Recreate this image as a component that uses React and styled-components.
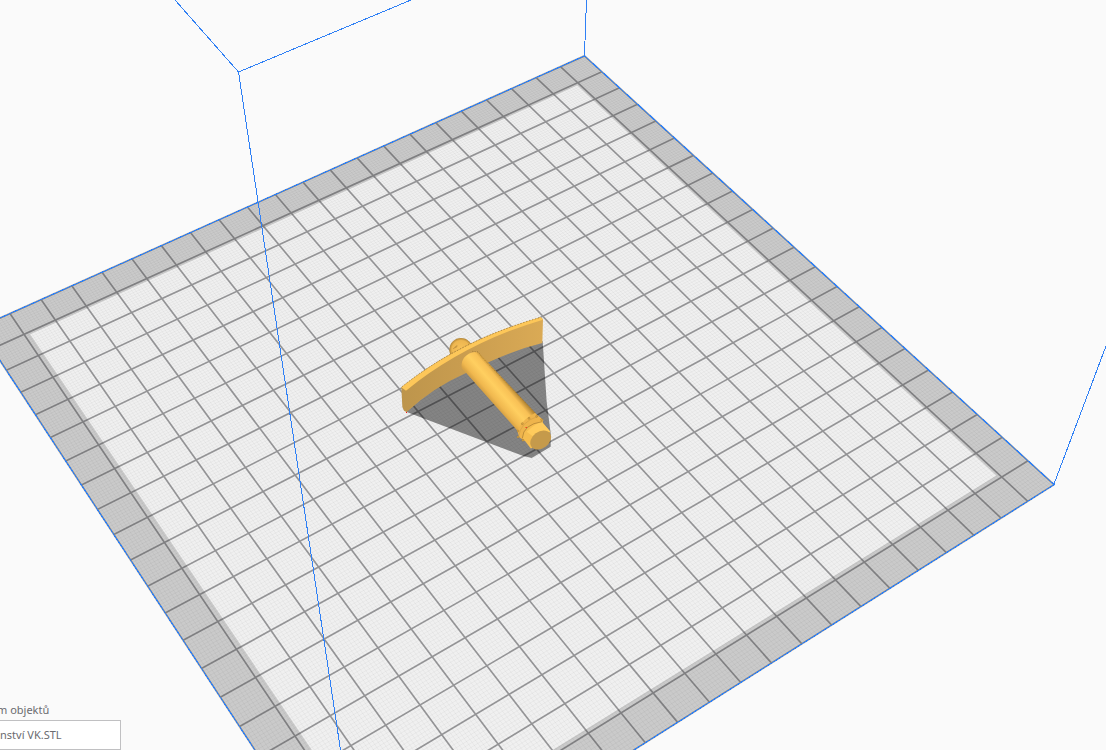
import styled, { createGlobalStyle } from "styled-components";

const GlobalStyle = createGlobalStyle`
    body {
        margin: 0;
        background-color: #fafafa;
        font-family: "Noto Sans", "Open Sans", sans-serif;
    }
`;

const CELLS = 22;
const MINOR_PER_CELL = 10;

// perspective projection of a build plate position (in cells) to the view
const project = (u, v) => {
    const s = u - 1;
    const t = v - 1;
    const w = 1 - 0.006118 * s - 0.008964 * t;
    const x = (577.7 - 27.832 * s + 12.221 * t) / w;
    const y = (82.7 + 10.535 * s + 15.439 * t) / w;
    return `${x.toFixed(2)} ${y.toFixed(2)}`;
}

const segment = (u1, v1, u2, v2) => `M${project(u1, v1)}L${project(u2, v2)}`;

const area = (u1, v1, u2, v2) =>
    `M${project(u1, v1)}L${project(u2, v1)}L${project(u2, v2)}L${project(u1, v2)}Z`;

const gridPath = (step) => {
    let path = "";
    for (let i = 0; i <= CELLS * step; i++) {
        const p = i / step;
        path += segment(p, 0, p, CELLS) + segment(0, p, CELLS, p);
    }
    return path;
}

const plate = area(0, 0, CELLS, CELLS);
const printable = area(1.09, 1.1, 20.85, 20.88);
const majorGrid = gridPath(1);
const minorGrid = gridPath(MINOR_PER_CELL);

function BuildPlate() {
    return (
        <g>
            <path d={plate} fill="#cacaca" />
            <path d={printable} fill="#f0f0f0" />
            <path d={minorGrid} fill="none" stroke="#000" strokeOpacity="0.035" strokeWidth="1" />
            <path d={majorGrid} fill="none" stroke="#2e2e32" strokeOpacity="0.45" strokeWidth="1.7" />
        </g>
    )
}

function BuildVolume() {
    return (
        <g fill="none" stroke="#2f80f5" strokeWidth="1" shapeRendering="crispEdges">
            <path d={plate} />
            <path d="M175 0L238.500 72L411 0" />
            <path d="M238.500 72L340.500 750" />
            <path d="M586.500 0L584.500 55" />
            <path d="M1054 484L1106 346" />
        </g>
    )
}

function Model() {
    return (
        <g transform="translate(390 305) scale(0.33333)">
            <defs>
                <linearGradient id="face" x1="36" y1="0" x2="458" y2="0" gradientUnits="userSpaceOnUse">
                    <stop offset="0" stopColor="#bd954c" />
                    <stop offset="0.5" stopColor="#cb9e50" />
                    <stop offset="1" stopColor="#daaa55" />
                </linearGradient>
                <linearGradient id="rod" x1="299" y1="281" x2="353" y2="234" gradientUnits="userSpaceOnUse">
                    <stop offset="0" stopColor="#d8a345" />
                    <stop offset="0.15" stopColor="#f0b84f" />
                    <stop offset="0.5" stopColor="#ffcf60" />
                    <stop offset="0.8" stopColor="#f8c055" />
                    <stop offset="1" stopColor="#b98934" />
                </linearGradient>
                <radialGradient id="ball" cx="0.5" cy="0.5" r="0.52">
                    <stop offset="0" stopColor="#f8c35b" />
                    <stop offset="0.75" stopColor="#edb650" />
                    <stop offset="1" stopColor="#a67c33" />
                </radialGradient>
            </defs>

            <path
                d="M458 108L470 290L482 385V425L425 459L400 453L48 320Q160 225 230 190L300 150Z"
                fill="#000"
                fillOpacity="0.45"
            />

            <path d="M180 136L182 156L215 140Z" fill="#d09c45" />
            <circle cx="213" cy="134" r="35" fill="url(#ball)" />
            <path d="M190 132L201 121M196 128L202 124" stroke="#a67a30" strokeWidth="2" />

            {/* curved guard */}
            <path
                d="M34 247Q210 104 452 37L459 42L457 114Q380 133 299 170L222 207Q130 247 50 321L42 317L37 306Z"
                fill="url(#face)"
            />
            <path d="M34 247Q210 106 452 37L459 44Q225 113 48 257Z" fill="#fdc759" />
            <path d="M36 245Q210 106 452 37" fill="none" stroke="#8b6728" strokeWidth="2" strokeDasharray="4 5" />

            {/* rod */}
            <path
                d="M216 190Q211 174 222 158Q235 142 258 140Q268 141 273 150L437 325L383 378Z"
                fill="url(#rod)"
            />
            <path d="M247 139L265 141L276 157L437 325" fill="none" stroke="#8b6728" strokeWidth="2" strokeDasharray="3 4" />

            {/* collar and tip */}
            <path d="M382 377Q397 342 435 324L460 345L457 356L404 408L388 397Z" fill="#eeb44c" />
            <path d="M398 399Q402 361 456 351L481 380L423 431Z" fill="#f5bd50" />
            <path d="M410 380Q443 350 456 351L481 380L440 402Z" fill="#ffcb5c" />
            <path d="M397 400Q399 358 457 350" fill="none" stroke="#a67a30" strokeWidth="2" />
            <path d="M386 396Q390 351 444 334" fill="none" stroke="#d39f44" strokeWidth="2" />
            <ellipse cx="452" cy="405" rx="34" ry="25" transform="rotate(-36 452 405)" fill="#c59a4b" />
            <g fill="#dca746" stroke="#8b6728" strokeWidth="1">
                <circle cx="384" cy="378" r="3" />
                <circle cx="384" cy="396" r="3" />
                <circle cx="397" cy="356" r="3" />
                <circle cx="417" cy="340" r="3" />
                <circle cx="440" cy="334" r="3" />
                <circle cx="455" cy="344" r="3" />
                <circle cx="399" cy="406" r="3" />
            </g>
            <path d="M48 321h3v3h-3zM407 366h3v3h-3z" fill="#f01010" />
        </g>
    )
}

function ObjectList() {
    return (
        <ListPanel>
            <ListToggle type="button">m objektů</ListToggle>
            <List>
                <li>
                    <ListItem type="button">nství VK.STL</ListItem>
                </li>
            </List>
        </ListPanel>
    )
}

function App() {
    return (
        <Viewport>
            <GlobalStyle />
            <Scene viewBox="0 0 1106 750" preserveAspectRatio="xMidYMid slice" aria-label="3D view">
                <BuildPlate />
                <Model />
                <BuildVolume />
            </Scene>
            <ObjectList />
        </Viewport>
    )
}

const Viewport = styled.main`
    display: grid;
    height: 100vh;
    overflow: hidden;
    background-color: #fafafa;

    > * {
        grid-area: 1 / 1;
    }
`;

const Scene = styled.svg`
    display: block;
    width: 100%;
    height: 100vh;
`;

const ListPanel = styled.section`
    z-index: 1;
    align-self: end;
    justify-self: start;
    display: flex;
    flex-direction: column;
    gap: 2px;
    margin-left: -3px;
`;

const ListToggle = styled.button`
    padding: 0;
    border: none;
    background: none;
    color: #6b6b6f;
    font-family: inherit;
    font-size: 11px;
    line-height: 16px;
    text-align: left;
    cursor: pointer;
`;

const List = styled.ul`
    margin: 0;
    padding: 0;
    list-style: none;
`;

const ListItem = styled.button`
    display: block;
    width: 124px;
    height: 30px;
    padding: 0 2px;
    border: 1px solid #c0c0c2;
    background-color: #fff;
    color: #6b6b6f;
    font-family: inherit;
    font-size: 11px;
    line-height: 16px;
    text-align: left;
    cursor: pointer;
`;

export default App;
